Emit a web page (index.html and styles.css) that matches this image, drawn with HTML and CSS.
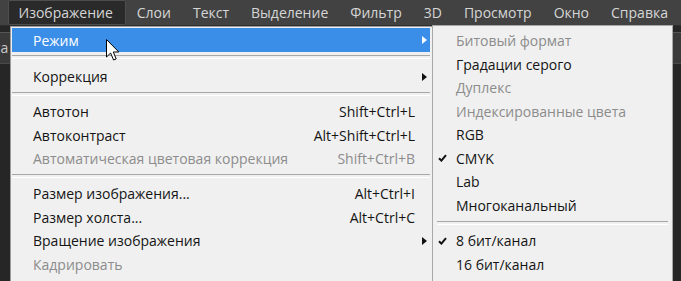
FILE: index.html
```html
<!DOCTYPE html>
<html lang="ru">
<head>
    <meta charset="UTF-8">
    <title>Изображение - Режим</title>
    <link rel="stylesheet" href="styles.css">
</head>
<body>
    <div class="screen">
        <nav class="menubar">
            <span class="menubar-item active">Изображение</span>
            <span class="menubar-item">Слои</span>
            <span class="menubar-item">Текст</span>
            <span class="menubar-item">Выделение</span>
            <span class="menubar-item">Фильтр</span>
            <span class="menubar-item">3D</span>
            <span class="menubar-item">Просмотр</span>
            <span class="menubar-item">Окно</span>
            <span class="menubar-item">Справка</span>
        </nav>

        <div class="workspace">
            <div class="side side-left">
                <div class="panel-tab">Ра</div>
            </div>

            <!-- Image menu -->
            <div class="menu">
                <div class="menu-item highlighted tall">
                    <span class="label">Режим</span>
                    <span class="arrow-cell"><span class="arrow"></span></span>
                </div>
                <div class="separator first"></div>
                <div class="menu-item">
                    <span class="label">Коррекция</span>
                    <span class="arrow-cell"><span class="arrow"></span></span>
                </div>
                <div class="separator"></div>
                <div class="menu-item">
                    <span class="label">Автотон</span>
                    <span class="shortcut">Shift+Ctrl+L</span>
                    <span class="arrow-cell"></span>
                </div>
                <div class="menu-item">
                    <span class="label">Автоконтраст</span>
                    <span class="shortcut">Alt+Shift+Ctrl+L</span>
                    <span class="arrow-cell"></span>
                </div>
                <div class="menu-item disabled">
                    <span class="label">Автоматическая цветовая коррекция</span>
                    <span class="shortcut">Shift+Ctrl+B</span>
                    <span class="arrow-cell"></span>
                </div>
                <div class="separator"></div>
                <div class="menu-item">
                    <span class="label">Размер изображения...</span>
                    <span class="shortcut">Alt+Ctrl+I</span>
                    <span class="arrow-cell"></span>
                </div>
                <div class="menu-item">
                    <span class="label">Размер холста...</span>
                    <span class="shortcut">Alt+Ctrl+C</span>
                    <span class="arrow-cell"></span>
                </div>
                <div class="menu-item">
                    <span class="label">Вращение изображения</span>
                    <span class="arrow-cell"><span class="arrow"></span></span>
                </div>
                <div class="menu-item disabled">
                    <span class="label">Кадрировать</span>
                    <span class="arrow-cell"></span>
                </div>
            </div>

            <!-- Mode submenu -->
            <div class="submenu">
                <div class="menu-item disabled"><span class="check-cell"></span><span class="label">Битовый формат</span></div>
                <div class="menu-item"><span class="check-cell"></span><span class="label">Градации серого</span></div>
                <div class="menu-item disabled"><span class="check-cell"></span><span class="label">Дуплекс</span></div>
                <div class="menu-item disabled"><span class="check-cell"></span><span class="label">Индексированные цвета</span></div>
                <div class="menu-item"><span class="check-cell"></span><span class="label">RGB</span></div>
                <div class="menu-item">
                    <span class="check-cell">
                        <svg class="check" width="9" height="8" viewBox="0 0 9 8"><path d="M1 4.2 L3.4 6.6 L8 1.2" fill="none" stroke="#111" stroke-width="2"/></svg>
                    </span>
                    <span class="label">CMYK</span>
                </div>
                <div class="menu-item"><span class="check-cell"></span><span class="label">Lab</span></div>
                <div class="menu-item"><span class="check-cell"></span><span class="label">Многоканальный</span></div>
                <div class="separator"></div>
                <div class="menu-item">
                    <span class="check-cell">
                        <svg class="check" width="9" height="8" viewBox="0 0 9 8"><path d="M1 4.2 L3.4 6.6 L8 1.2" fill="none" stroke="#111" stroke-width="2"/></svg>
                    </span>
                    <span class="label">8 бит/канал</span>
                </div>
                <div class="menu-item"><span class="check-cell"></span><span class="label">16 бит/канал</span></div>
            </div>

            <div class="side side-right">
                <div class="panel-tab"></div>
            </div>
        </div>

        <svg class="cursor" width="14" height="22" viewBox="0 0 14 22">
            <path d="M0.5 0.5 V18 L4.6 14 L7.6 21 L10.2 19.9 L7.3 13 H12.8 Z" fill="#fff" stroke="#000" stroke-width="1"/>
        </svg>
    </div>
</body>
</html>
```

FILE: styles.css
```css
/* Base */
* {
    margin: 0;
    padding: 0;
    box-sizing: border-box;
}

body {
    font-family: 'Open Sans', 'Noto Sans', 'DejaVu Sans', sans-serif;
    font-size: 14px;
    font-weight: 500;
    background-color: #2b2b2b;
    color: #141414;
    overflow: hidden;
}

.screen {
    position: relative;
    width: 681px;
    height: 281px;
    overflow: hidden;
}

/* Menu bar */
.menubar {
    display: flex;
    align-items: stretch;
    height: 26px;
    padding-left: 8px;
    background-color: #424242;
    border-bottom: 1px solid #2e2e2e;
}

.menubar-item {
    display: flex;
    align-items: center;
    padding: 0 10px;
    color: #d6d6d6;
    font-weight: 400;
    border: 1px solid transparent;
    border-radius: 2px;
}

.menubar-item.active {
    background-color: #2a2a2a;
    border-color: #4e4e4e;
    padding-left: 9.5px;
    padding-right: 12px;
}

/* Workspace */
.workspace {
    display: flex;
    height: 255px;
}

.side {
    background-color: #262626;
}

.side-left {
    width: 10px;
    overflow: hidden;
}

.side-right {
    flex: 1;
}

.panel-tab {
    height: 32px;
    margin-top: 6px;
    border-top: 1px solid #565656;
    border-bottom: 1px solid #4a4a4a;
    background-color: #3a3a3a;
    color: #c8c8c8;
    font-weight: 400;
    line-height: 30px;
    text-indent: -8px;
}

/* Menus */
.menu,
.submenu {
    background-color: #f0f0f0;
    border: 1px solid #9c9c9c;
    border-bottom: none;
}

.menu {
    width: 422px;
    padding: 1px 2px 0 1px;
    border-right: none;
}

.submenu {
    width: 241px;
    margin-top: -1px;
    padding-top: 3px;
    border-color: #a8a8a8;
}

.menu-item {
    display: flex;
    align-items: center;
    height: 23.5px;
    padding: 0 0 0 21px;
    white-space: nowrap;
}

.menu-item.tall {
    height: 24px;
}

.menu-item .label {
    flex: 1;
}

.menu-item.disabled {
    color: #8c8c8c;
}

.menu-item.highlighted {
    background-color: #3b8ee8;
    color: #ffffff;
}

.shortcut {
    text-align: right;
}

.arrow-cell {
    display: flex;
    align-items: center;
    width: 15px;
    height: 100%;
}

.arrow {
    width: 0;
    height: 0;
    margin-left: 7px;
    border-top: 4px solid transparent;
    border-bottom: 4px solid transparent;
    border-left: 5px solid #111;
}

.highlighted .arrow {
    border-left-color: #ffffff;
}

.separator {
    height: 11.5px;
    padding-top: 3.5px;
}

.separator::before {
    content: "";
    display: block;
    height: 2px;
    border-top: 1px solid #a7a7a7;
    border-bottom: 1px solid #ffffff;
}

.separator.first {
    height: 13px;
    padding-top: 3px;
}

.submenu .menu-item {
    padding-left: 0;
}

.submenu .separator {
    height: 12px;
    margin: 0 4px;
}

.check-cell {
    display: flex;
    align-items: center;
    width: 23px;
    height: 100%;
    padding-left: 5px;
}

/* Mouse pointer over the highlighted item */
.cursor {
    position: absolute;
    left: 106px;
    top: 39px;
}
```
